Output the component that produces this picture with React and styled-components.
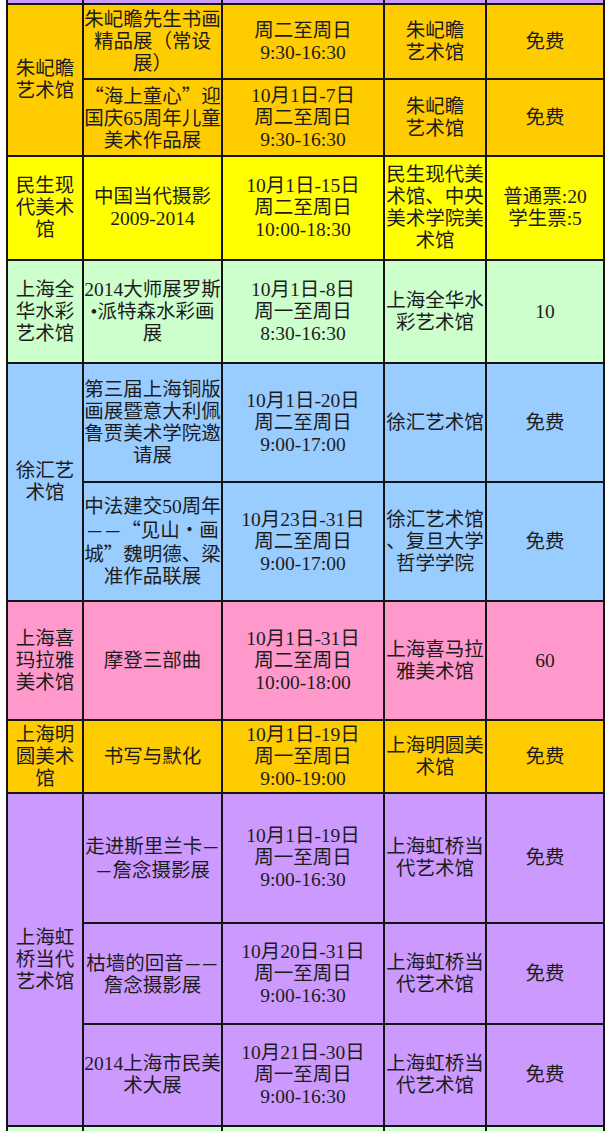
import React from 'react';
import styled, { createGlobalStyle } from 'styled-components';

const GlobalStyle = createGlobalStyle`
  html, body {
    margin: 0;
    padding: 0;
    background: #ffffff;
    overflow: hidden;
  }
`;

const Page = styled.div`
  padding: 0 6px;
  font-family: "Liberation Serif", "Noto Sans CJK SC", serif;
`;

const Table = styled.table`
  border-collapse: collapse;
  table-layout: fixed;
  width: 597px;
`;

const Row = styled.tr`
  height: ${(p) => p.$h}px;
`;

const Cell = styled.td`
  background: ${(p) => p.$bg};
  border: 2px solid #141414;
  border-top-width: ${(p) => (p.$open ? 0 : 2)}px;
  padding: 0;
  text-align: center;
  vertical-align: middle;
  font-size: 19.5px;
  line-height: 22px;
  color: #1c1c1c;
  white-space: nowrap;
`;

/* full-width CJK punctuation (quotes, dashes, middle dot) */
const Punct = styled.span`
  display: inline-block;
  line-height: 22px;
  font-family: "Noto Sans CJK SC", sans-serif;
  transform: ${(p) => (p.$dash ? 'scaleX(0.86)' : 'none')};
`;

const colors = {
  orange: '#ffcc00',
  yellow: '#ffff00',
  green: '#ccffcc',
  blue: '#99ccff',
  pink: '#ff99cc',
  purple: '#cc99ff',
};

const groups = [
  {
    bg: colors.orange,
    name: ['朱屺瞻', '艺术馆'],
    items: [
      {
        h: 75,
        title: ['朱屺瞻先生书画', '精品展（常设', '展）'],
        time: ['周二至周日', '9:30-16:30'],
        venue: ['朱屺瞻', '艺术馆'],
        price: ['免费'],
      },
      {
        h: 77,
        title: ['“海上童心”迎', '国庆65周年儿童', '美术作品展'],
        time: ['10月1日-7日', '周二至周日', '9:30-16:30'],
        venue: ['朱屺瞻', '艺术馆'],
        price: ['免费'],
      },
    ],
  },
  {
    bg: colors.yellow,
    name: ['民生现', '代美术', '馆'],
    items: [
      {
        h: 104,
        title: ['中国当代摄影', '2009-2014'],
        time: ['10月1日-15日', '周二至周日', '10:00-18:30'],
        venue: ['民生现代美', '术馆、中央', '美术学院美', '术馆'],
        price: ['普通票:20', '学生票:5'],
      },
    ],
  },
  {
    bg: colors.green,
    name: ['上海全', '华水彩', '艺术馆'],
    items: [
      {
        h: 103,
        title: ['2014大师展罗斯', '•派特森水彩画', '展'],
        time: ['10月1日-8日', '周一至周日', '8:30-16:30'],
        venue: ['上海全华水', '彩艺术馆'],
        price: ['10'],
      },
    ],
  },
  {
    bg: colors.blue,
    name: ['徐汇艺', '术馆'],
    items: [
      {
        h: 119,
        title: ['第三届上海铜版', '画展暨意大利佩', '鲁贾美术学院邀', '请展'],
        time: ['10月1日-20日', '周二至周日', '9:00-17:00'],
        venue: ['徐汇艺术馆'],
        price: ['免费'],
      },
      {
        h: 119,
        title: ['中法建交50周年', '——“见山·画', '城”魏明德、梁', '准作品联展'],
        time: ['10月23日-31日', '周二至周日', '9:00-17:00'],
        venue: ['徐汇艺术馆', '、复旦大学', '哲学学院'],
        price: ['免费'],
      },
    ],
  },
  {
    bg: colors.pink,
    name: ['上海喜', '玛拉雅', '美术馆'],
    items: [
      {
        h: 119,
        title: ['摩登三部曲'],
        time: ['10月1日-31日', '周二至周日', '10:00-18:00'],
        venue: ['上海喜马拉', '雅美术馆'],
        price: ['60'],
      },
    ],
  },
  {
    bg: colors.orange,
    name: ['上海明', '圆美术', '馆'],
    items: [
      {
        h: 73,
        title: ['书写与默化'],
        time: ['10月1日-19日', '周一至周日', '9:00-19:00'],
        venue: ['上海明圆美', '术馆'],
        price: ['免费'],
      },
    ],
  },
  {
    bg: colors.purple,
    name: ['上海虹', '桥当代', '艺术馆'],
    items: [
      {
        h: 130,
        title: ['走进斯里兰卡—', '—詹念摄影展'],
        time: ['10月1日-19日', '周一至周日', '9:00-16:30'],
        venue: ['上海虹桥当', '代艺术馆'],
        price: ['免费'],
      },
      {
        h: 101,
        title: ['枯墙的回音——', '詹念摄影展'],
        time: ['10月20日-31日', '周一至周日', '9:00-16:30'],
        venue: ['上海虹桥当', '代艺术馆'],
        price: ['免费'],
      },
      {
        h: 102,
        title: ['2014上海市民美', '术大展'],
        time: ['10月21日-30日', '周一至周日', '9:00-16:30'],
        venue: ['上海虹桥当', '代艺术馆'],
        price: ['免费'],
      },
    ],
  },
];

const splitPunct = (line) =>
  line
    .split(/([“”·—])/)
    .filter((part) => part !== '')
    .map((part, i) =>
      /^[“”·—]$/.test(part) ? (
        <Punct key={i} $dash={part === '—'}>
          {part}
        </Punct>
      ) : (
        part
      )
    );

const Lines = ({ lines }) =>
  lines.map((line, i) => (
    <React.Fragment key={i}>
      {i > 0 && <br />}
      {splitPunct(line)}
    </React.Fragment>
  ));

const StripRow = ({ bg, h, open }) => (
  <Row $h={h}>
    {[0, 1, 2, 3, 4].map((i) => (
      <Cell key={i} $bg={bg} $open={open} />
    ))}
  </Row>
);

export default function App() {
  return (
    <Page>
      <GlobalStyle />
      <Table>
        <colgroup>
          <col style={{ width: 76 }} />
          <col style={{ width: 139 }} />
          <col style={{ width: 162 }} />
          <col style={{ width: 102 }} />
          <col style={{ width: 118 }} />
        </colgroup>
        <tbody>
          <StripRow bg={colors.purple} h={4} open />
          {groups.map((g, gi) =>
            g.items.map((item, ii) => (
              <Row key={`${gi}-${ii}`} $h={item.h}>
                {ii === 0 && (
                  <Cell $bg={g.bg} rowSpan={g.items.length}>
                    <Lines lines={g.name} />
                  </Cell>
                )}
                <Cell $bg={g.bg}>
                  <Lines lines={item.title} />
                </Cell>
                <Cell $bg={g.bg}>
                  <Lines lines={item.time} />
                </Cell>
                <Cell $bg={g.bg}>
                  <Lines lines={item.venue} />
                </Cell>
                <Cell $bg={g.bg}>
                  <Lines lines={item.price} />
                </Cell>
              </Row>
            ))
          )}
          <StripRow bg={colors.green} h={30} />
        </tbody>
      </Table>
    </Page>
  );
}
